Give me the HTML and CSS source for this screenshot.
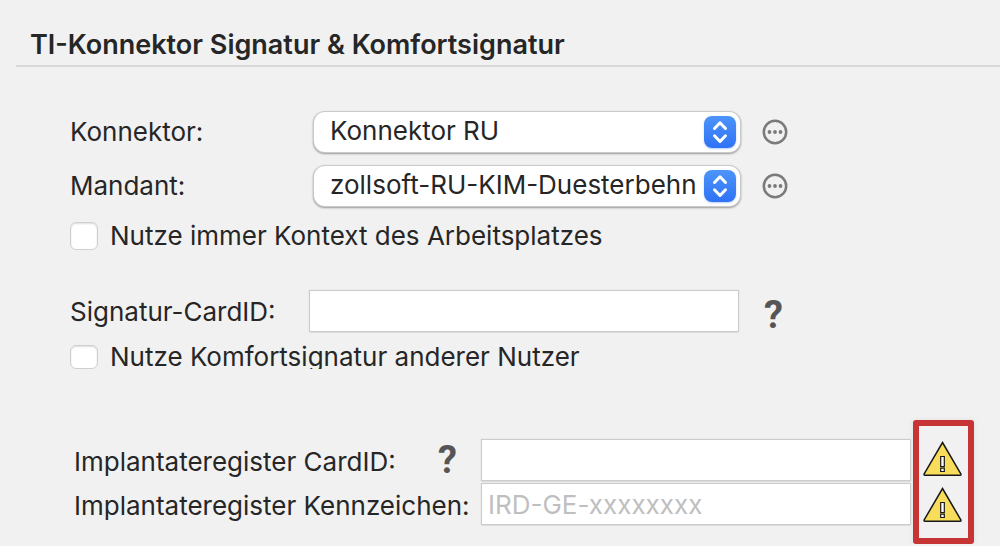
FILE: index.html
```html
<!DOCTYPE html>
<html lang="de">
<head>
<meta charset="utf-8">
<meta name="viewport" content="width=device-width, initial-scale=1">
<title>TI-Konnektor Signatur &amp; Komfortsignatur</title>
<link rel="stylesheet" href="styles.css">
</head>
<body>
<h1 class="title">TI-Konnektor Signatur &amp; Komfortsignatur</h1>
<form class="settings">
  <section class="group connection">
    <div class="row">
      <label class="label" for="konnektor">Konnektor:</label>
      <div class="popup">
        <select class="popup-select" id="konnektor"><option>Konnektor RU</option></select>
        <svg class="popup-arrows" viewBox="0 0 32 32" aria-hidden="true"><path d="M10.500 12.500 16 6.800 21.500 12.500M10.500 19.800 16 25.500 21.500 19.800"/></svg>
      </div>
      <button class="more" type="button" aria-label="Konnektor bearbeiten">
        <svg class="more-icon" viewBox="0 0 26 26"><circle class="ring" cx="13" cy="13" r="11.200"/><circle cx="7.500" cy="13" r="1.900"/><circle cx="13" cy="13" r="1.900"/><circle cx="18.500" cy="13" r="1.900"/></svg>
      </button>
    </div>
    <div class="row">
      <label class="label" for="mandant">Mandant:</label>
      <div class="popup">
        <select class="popup-select" id="mandant"><option>zollsoft-RU-KIM-Duesterbehn</option></select>
        <svg class="popup-arrows" viewBox="0 0 32 32" aria-hidden="true"><path d="M10.500 12.500 16 6.800 21.500 12.500M10.500 19.800 16 25.500 21.500 19.800"/></svg>
      </div>
      <button class="more" type="button" aria-label="Mandant bearbeiten">
        <svg class="more-icon" viewBox="0 0 26 26"><circle class="ring" cx="13" cy="13" r="11.200"/><circle cx="7.500" cy="13" r="1.900"/><circle cx="13" cy="13" r="1.900"/><circle cx="18.500" cy="13" r="1.900"/></svg>
      </button>
    </div>
    <label class="check"><input class="checkbox" type="checkbox">Nutze immer Kontext des Arbeitsplatzes</label>
  </section>

  <section class="group signature">
    <div class="row signature-row">
      <label class="label" for="signatur">Signatur-CardID:</label>
      <input class="field" id="signatur" type="text">
      <button class="help" type="button">?</button>
    </div>
    <label class="check check-clipped"><input class="checkbox" type="checkbox">Nutze Komfortsignatur anderer Nutzer</label>
  </section>

  <section class="register">
    <div class="register-rows">
      <div class="register-row">
        <label class="label" for="cardid">Implantateregister CardID:</label>
        <button class="help help-raised" type="button">?</button>
        <input class="field" id="cardid" type="text">
      </div>
      <div class="register-row">
        <label class="label label-wide" for="kennzeichen">Implantateregister Kennzeichen:</label>
        <input class="field" id="kennzeichen" type="text" placeholder="IRD-GE-xxxxxxxx">
      </div>
    </div>
    <div class="warnings">
      <svg class="warning" viewBox="0 0 40 36" role="img" aria-label="Warnung"><path class="sign" d="M20 1.500 38.500 33.200Q38.500 34.300 37.500 34.300H2.500Q1.500 34.300 1.500 33.200Z"/><path class="mark" d="M18.200 15.500h3.600v10h-3.600zM18.200 27.200h3.600v3.300h-3.600z"/></svg>
      <svg class="warning" viewBox="0 0 40 36" role="img" aria-label="Warnung"><path class="sign" d="M20 1.500 38.500 33.200Q38.500 34.300 37.500 34.300H2.500Q1.500 34.300 1.500 33.200Z"/><path class="mark" d="M18.200 15.500h3.600v10h-3.600zM18.200 27.200h3.600v3.300h-3.600z"/></svg>
    </div>
  </section>
</form>
</body>
</html>
```
FILE: styles.css
```css
* {
  box-sizing: border-box;
}

body {
  margin: 0;
  background: #f1f1f1;
  color: #262626;
  font: 26px/32px Inter, "Liberation Sans", sans-serif;
  white-space: nowrap;
}

input,
select,
button {
  margin: 0;
  color: inherit;
  font: inherit;
}

.title {
  margin: 0 0 0 16px;
  padding: 29px 0 4px 14px;
  border-bottom: 2px solid #d8d8d8;
  font-size: 27px;
  line-height: 32px;
  font-weight: 600;
}

.settings {
  padding: 45px 26px 0 70px;
}

.connection {
  display: grid;
  gap: 14px;
}

.row {
  display: grid;
  grid-template-columns: 244px minmax(0, 1fr) 22px 212px;
  align-items: center;
}

.row .more,
.row .help {
  grid-column: 4;
  justify-self: start;
}

.popup {
  position: relative;
}

.popup-select {
  display: block;
  width: 100%;
  height: 40px;
  padding: 0 38px 2px 16px;
  border: 0;
  border-radius: 11px;
  background: #fff;
  box-shadow: 0 0 0 1px #c9c9c9, 0 1px 2px 1px #999;
  appearance: none;
}

.popup-arrows {
  position: absolute;
  top: 4px;
  right: 4px;
  width: 32px;
  height: 32px;
  border-radius: 8px;
  background: linear-gradient(#4c94fa, #2f72f6);
  box-shadow: 0 1px 2px #b9d0fa;
  fill: none;
  stroke: #fff;
  stroke-width: 3;
  stroke-linecap: round;
  stroke-linejoin: round;
  pointer-events: none;
}

.more,
.help {
  padding: 0;
  border: 0;
  background: none;
}

.more-icon {
  display: block;
  width: 26px;
  height: 26px;
  fill: #7a7a7a;
}

.ring {
  fill: none;
  stroke: #7a7a7a;
  stroke-width: 2.5;
}

.check {
  display: flex;
  align-items: center;
  gap: 12px;
  justify-self: start;
}

.checkbox {
  flex: none;
  width: 28px;
  height: 28px;
  border: 1px solid #cfcfcf;
  border-radius: 6px;
  background: #fff;
  box-shadow: inset 0 1px 2px #ddd;
  appearance: none;
}

.signature {
  margin-top: 39px;
}

.signature-row {
  grid-template-columns: 240px minmax(0, 1fr) 26px 210px;
}

.signature-row .label {
  padding-top: 2px;
}

.signature-row .help {
  height: 40px;
  line-height: 48px;
}

.check-clipped {
  align-items: flex-start;
  height: 28px;
  margin-top: 10px;
  overflow: hidden;
}

.check-clipped .checkbox {
  height: 24px;
  margin-top: 4px;
}

.field {
  width: 100%;
  height: 40px;
  padding: 0 6px;
  border: 0;
  background: #fff;
  box-shadow: 0 0 1px 1px #ccc, 0 1px 1px #888;
}

.field::placeholder {
  color: #bfbfbf;
  opacity: 1;
}

.help {
  color: #555;
  font: bold 38px/40px Roboto, "Liberation Sans", sans-serif;
}

.register {
  display: flex;
  align-items: center;
  gap: 3px;
  margin-top: 51px;
  padding-left: 4px;
}

.register-rows {
  display: grid;
  flex: 1;
  gap: 4px;
}

.register-row {
  display: grid;
  grid-template-columns: 364px 44px minmax(0, 1fr);
  align-items: center;
}

.register-row .label {
  padding-top: 4px;
}

.label-wide {
  grid-column: span 2;
}

.help-raised {
  height: 40px;
  justify-self: start;
  line-height: 34px;
}

.warnings {
  display: grid;
  gap: 10px;
  padding: 15px 5px 15px 3px;
  border: 6px solid #c63436;
  border-radius: 3px;
  box-shadow: 0 0 5px #ddd;
}

.warning {
  display: block;
  width: 41px;
  height: 36px;
}

.sign {
  fill: #f8dc5c;
  stroke: #171717;
  stroke-width: 1.5;
}

.mark {
  fill: #fff;
  stroke: #171717;
  stroke-width: 1.2;
}
```
